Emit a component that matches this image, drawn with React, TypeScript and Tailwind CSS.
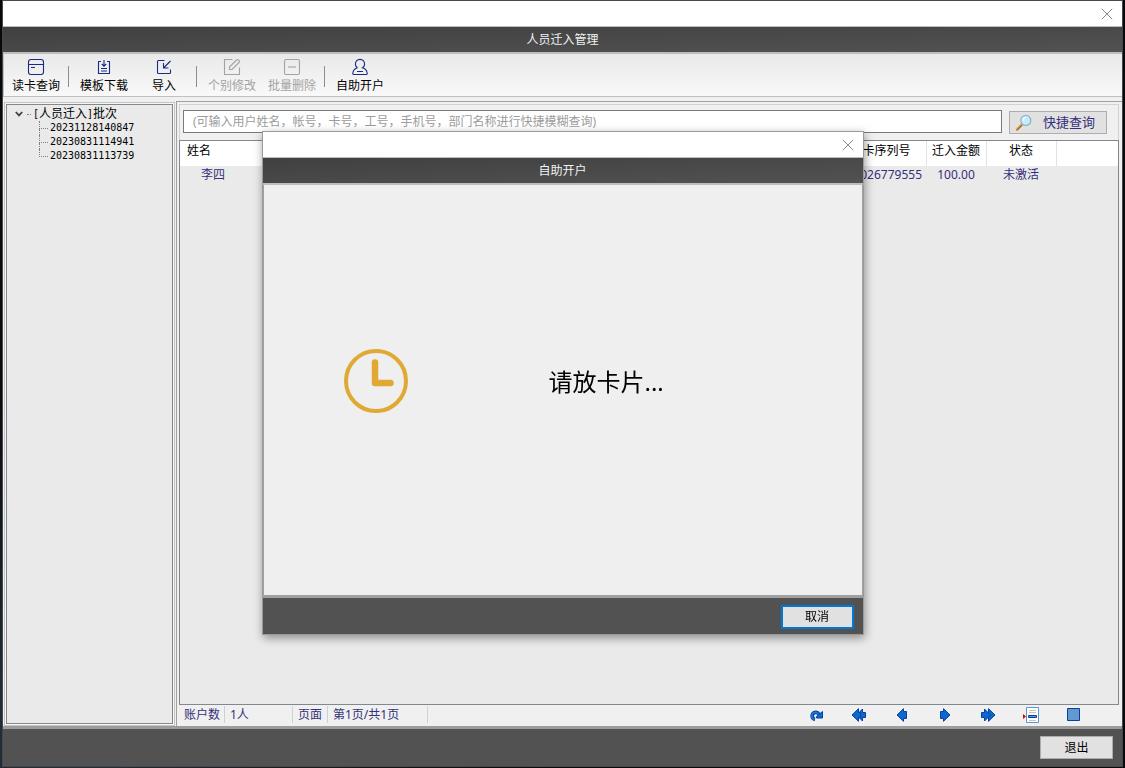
import type { ReactNode } from "react";

type ToolProps = { label: string; disabled?: boolean; children: ReactNode };

function Tool({ label, disabled = false, children }: ToolProps) {
  return (
    <button
      type="button"
      disabled={disabled}
      className="flex w-[60px] flex-col items-center gap-0.5 whitespace-nowrap text-[#1b2a86] disabled:text-[#a3a3a3]"
    >
      <svg className="h-[18px] w-[18px]" viewBox="0 0 18 18" fill="none" stroke="currentColor" strokeWidth="1.1" aria-hidden="true">
        {children}
      </svg>
      <span className={disabled ? "text-[#a3a3a3]" : "text-black"}>{label}</span>
    </button>
  );
}

function ToolDivider() {
  return <span className="mr-[5px] ml-0.5 h-[21px] w-px bg-[#8c8c8c]" />;
}

function CloseButton({ label }: { label: string }) {
  return (
    <button type="button" aria-label={label} className="flex h-full w-[30px] items-center justify-center">
      <svg className="h-3 w-3" viewBox="0 0 12 12" stroke="#8a8a8a" strokeWidth="1" aria-hidden="true">
        <path d="M.8 .8 11.2 11.2M11.2 .8 .8 11.2" />
      </svg>
    </button>
  );
}

function TitleBar({ title, closeLabel }: { title: string; closeLabel: string }) {
  return (
    <header>
      <div className="flex h-[25px] justify-end bg-white">
        <CloseButton label={closeLabel} />
      </div>
      <h1 className="h-7 border-t border-b-2 border-[#bdbdbd] bg-linear-to-br from-[#404040] to-[#525252] text-center leading-[25px] text-[#f2f2f2]">
        {title}
      </h1>
    </header>
  );
}

const batches = ["20231128140847", "20230831114941", "20230831113739"];

function BatchTree() {
  return (
    <aside className="mt-px w-[171px] shrink-0 border border-[#c4c4c4] bg-[#f7f7f7] p-px">
      <div className="h-full border border-[#828790] bg-[#eaeaea] pt-0.5 text-black">
        <div className="flex h-3.5 items-center pl-2">
          <button type="button" aria-label="收起" className="flex h-3 w-3 items-center">
            <svg className="h-2 w-2" viewBox="0 0 8 8" fill="none" stroke="#404040" strokeWidth="1.8" aria-hidden="true">
              <path d="M.8 2 4 5.4 7.2 2" />
            </svg>
          </button>
          <span className="mr-0.5 w-1 border-t border-dotted border-[#808080]" />
          <span className="font-['DejaVu_Sans_Mono',monospace] text-[10px] leading-3.5">[</span>
          <span className="leading-3.5 whitespace-nowrap">人员迁入</span>
          <span className="font-['DejaVu_Sans_Mono',monospace] text-[10px] leading-3.5">]</span>
          <span className="leading-3.5 whitespace-nowrap">批次</span>
        </div>
        <ul className="pl-8 font-['DejaVu_Sans_Mono',monospace] text-[10px] leading-3.5">
          {batches.map((batch, i) => (
            <li key={batch} className="flex">
              <span className="mr-0.5 flex w-[9px] flex-col">
                <span className="flex-1 border-b border-l border-dotted border-[#808080]" />
                <span className={i < batches.length - 1 ? "flex-1 border-l border-dotted border-[#808080]" : "flex-1"} />
              </span>
              {batch}
            </li>
          ))}
        </ul>
      </div>
    </aside>
  );
}

function SearchRow() {
  return (
    <form className="flex h-9 items-start gap-[7px] border border-b-0 border-[#d2d2d2] bg-[#f0f0f0] pt-[5px] pr-[11px] pl-[3px]">
      <input
        type="search"
        aria-label="快捷查询"
        placeholder="(可输入用户姓名，帐号，卡号，工号，手机号，部门名称进行快捷模糊查询)"
        className="h-[23px] min-w-0 flex-1 border border-[#7a7a7a] bg-white pl-[9px] outline-none placeholder:text-[#9c9c9c]"
      />
      <button
        type="button"
        className="mt-px flex h-[23px] w-[98px] items-center gap-2.5 border border-[#adadad] bg-[#e1e1e1] pl-[5px] text-[13px] whitespace-nowrap text-[#34307a]"
      >
        <svg className="h-[18px] w-[18px] shrink-0" viewBox="0 0 18 18" aria-hidden="true">
          <path d="M1.5 16 7 10.5" stroke="#e09a3e" strokeWidth="2.6" />
          <path d="M1.6 16.6 7.4 10.9" stroke="#7c5230" strokeWidth="1" />
          <circle cx="10.8" cy="6.4" r="5" fill="#c5ecfb" stroke="#8fb3c9" strokeWidth="1.3" />
          <path d="M8 6.4a3 3 0 0 1 3-3" fill="none" stroke="#fff" strokeWidth="1.4" />
        </svg>
        快捷查询
      </button>
    </form>
  );
}

function AccountTable() {
  return (
    <div className="flex-1 border border-[#828790] bg-[#eaeaea]">
      <table className="w-full table-fixed border-collapse">
        <colgroup>
          <col className="w-[66px]" />
          <col />
          <col className="w-[79px]" />
          <col className="w-[60px]" />
          <col className="w-[70px]" />
          <col className="w-[62px]" />
        </colgroup>
        <thead>
          <tr className="h-[25px] bg-white text-black">
            <th className="pb-1.5 pl-[7px] text-left font-normal">姓名</th>
            <th className="border-r border-[#e2e2e2]" />
            <th className="border-r border-[#e2e2e2] pb-1.5 font-normal">卡序列号</th>
            <th className="border-r border-[#e2e2e2] pb-1.5 font-normal">迁入金额</th>
            <th className="border-r border-[#e2e2e2] pb-1.5 font-normal">状态</th>
            <th />
          </tr>
        </thead>
        <tbody>
          <tr className="h-[18px] text-center text-[#34307a]">
            <td>李四</td>
            <td />
            <td className="pr-1 text-right">026779555</td>
            <td>100.00</td>
            <td>未激活</td>
            <td />
          </tr>
        </tbody>
      </table>
    </div>
  );
}

function PagerButton({ label, children }: { label: string; children: ReactNode }) {
  return (
    <button type="button" aria-label={label} className="flex w-[43px] justify-center">
      <svg className="h-4 w-4" viewBox="0 0 16 16" fill="#0a68d0" stroke="#0a3f9c" strokeWidth="1" aria-hidden="true">
        {children}
      </svg>
    </button>
  );
}

function StatusBar() {
  return (
    <div className="flex h-[19px] bg-[#f0f0f0] pr-6 leading-[17px] text-[#34307a]">
      <div className="mr-1 flex h-[17px] whitespace-nowrap">
        <span className="w-[46px] border-r border-[#d0d0d0] pl-[5px]">账户数</span>
        <span className="w-[68px] border-r border-[#d0d0d0] pl-[5px]">1人</span>
        <span className="w-[35px] border-r border-[#d0d0d0] pl-[5px]">页面</span>
        <span className="w-[100px] border-r border-[#d0d0d0] pl-[5px]">第1页/共1页</span>
      </div>
      <nav className="ml-auto flex pt-px" aria-label="分页">
        <PagerButton label="刷新">
          <path d="M7 12.500a3.600 3.600 0 1 1 4-5" fill="none" stroke="#0a3f9c" strokeWidth="3.8" />
          <path d="M6.600 12.400a3.600 3.600 0 1 1 4.200-4.800" fill="none" stroke="#1f78dc" strokeWidth="1.8" />
          <path d="M14.500 4.500v6.500H8.500V9.500z" />
        </PagerButton>
        <PagerButton label="首页">
          <path d="M5.500 8 11.500 2v3.500h3v5h-3V14z" />
          <path d="M1 8 7.500 1.700v3.800h2v5h-2v3.800z" />
        </PagerButton>
        <PagerButton label="上一页">
          <path d="M3 8 9.500 1.700v2.800h3v7h-3v2.800z" />
        </PagerButton>
        <PagerButton label="下一页">
          <path d="M13 8 6.500 1.700v2.800h-3v7h3v2.800z" />
        </PagerButton>
        <PagerButton label="末页">
          <path d="M15 8 8.500 1.700v3.800h-2v5h2v3.800z" />
          <path d="M10.500 8 4.500 2v3.500h-3v5h3V14z" />
        </PagerButton>
        <PagerButton label="跳转">
          <path d="M0 7v5l3-2.5z" fill="#e00000" stroke="none" />
          <path d="M3.5 .5h12v15h-12z" fill="#fff" stroke="#5a97cc" />
          <path d="M6 3.5h7M6 5.5h7M6 13.5h7" stroke="#c4c4c4" />
          <path d="M5.5 8.5h8v2h-8z" fill="#5d9ad2" />
        </PagerButton>
        <PagerButton label="停止">
          <path d="M1.5 1.5h12v12h-12z" fill="#6299cf" />
        </PagerButton>
      </nav>
    </div>
  );
}

function OpenAccountDialog() {
  return (
    <div className="fixed inset-0 flex items-center justify-center pb-0.5">
      <section
        role="dialog"
        aria-label="自助开户"
        className="w-[602px] max-w-full border border-[#9a9a9a] bg-[#efefef] shadow-[1px_3px_9px_rgba(0,0,0,0.4)]"
      >
        <TitleBar title="自助开户" closeLabel="关闭对话框" />
        <div className="flex min-h-[410px] items-center gap-[141px] border-x border-[#a0a0a0] pb-[18px] pl-20">
          <svg className="h-16 w-16 shrink-0" viewBox="0 0 64 64" fill="none" stroke="#dfa934" aria-hidden="true">
            <circle cx="32" cy="32" r="30" strokeWidth="4" />
            <path d="M31 13.5V34H46.5" strokeWidth="6.5" strokeLinecap="round" strokeLinejoin="round" />
          </svg>
          <p className="pt-0.5 text-2xl text-black">请放卡片...</p>
        </div>
        <footer className="flex justify-end border-t-3 border-[#a0a0a0] bg-[#525252] pt-[7px] pr-[9px] pb-[5px]">
          <button type="button" className="h-6 w-[73px] border-2 border-[#0078d7] bg-[#e1e1e1] text-black">
            取消
          </button>
        </footer>
      </section>
    </div>
  );
}

export default function App() {
  return (
    <div className="flex min-h-screen flex-col bg-linear-to-tr from-[#202c3a] from-5% to-[#08090b] to-25% px-0.5 pb-px font-['Noto_Sans','Noto_Sans_CJK_SC',sans-serif] text-xs">
      <main className="flex flex-1 flex-col border border-[#484848] bg-[#f0f0f0]">
        <TitleBar title="人员迁入管理" closeLabel="关闭窗口" />
        <div
          role="toolbar"
          aria-label="工具栏"
          className="flex h-[43px] items-center border-b border-l border-[#c0c0c0] bg-linear-to-b from-[#e9e9e9] to-[#f9f9f9] pt-0.5 pl-0.5"
        >
          <Tool label="读卡查询">
            <rect x="1.5" y="1.5" width="15" height="15" rx="2.5" />
            <path d="M1.5 6.5h15M4 9.5h4" />
          </Tool>
          <ToolDivider />
          <Tool label="模板下载">
            <path d="M6 3.5H3.5v12h11v-12H12M9 2v6M6.8 6 9 8.2 11.2 6M6 10.5h6M6 13h6" />
          </Tool>
          <Tool label="导入">
            <path d="M9.5 2.5h-6a1 1 0 0 0-1 1v11a1 1 0 0 0 1 1h11a1 1 0 0 0 1-1v-3M15.5 3 8.5 10M8.5 5v5h5" />
          </Tool>
          <ToolDivider />
          <Tool label="个别修改" disabled>
            <path d="M9.5 1.5h-8v15h15v-7M6.5 11.5v-2.5L13.5 2q1-1 2 0l.5.5q1 1 0 2L9 11.5z" />
          </Tool>
          <Tool label="批量删除" disabled>
            <rect x="1.5" y="1.5" width="15" height="15" rx="1.5" />
            <path d="M5 9h8" />
          </Tool>
          <ToolDivider />
          <Tool label="自助开户">
            <path d="M6.5 9.8a4.6 4.6 0 1 1 5 0c2.7.7 4.2 2.5 4.7 5.2q.2 1.5-1.2 1.5H3q-1.4 0-1.2-1.5c.5-2.7 2-4.5 4.7-5.2M6 13.5h6" />
          </Tool>
        </div>

        <div className="flex flex-1 pt-1 pl-px">
          <BatchTree />
          <section className="ml-px flex min-w-0 flex-1 flex-col border-t border-l border-[#a0a0a0] pt-0.5 pr-[3px] pl-0.5">
            <SearchRow />
            <AccountTable />
            <div className="h-px" />
            <StatusBar />
            <div className="h-px" />
          </section>
        </div>

        <footer className="flex justify-end border-t-3 border-[#9c9c9c] bg-[#525252] py-[7px] pr-[9px]">
          <button type="button" className="h-[23px] w-[73px] border border-[#adadad] bg-[#e1e1e1] text-black">
            退出
          </button>
        </footer>
      </main>
      <OpenAccountDialog />
    </div>
  );
}
